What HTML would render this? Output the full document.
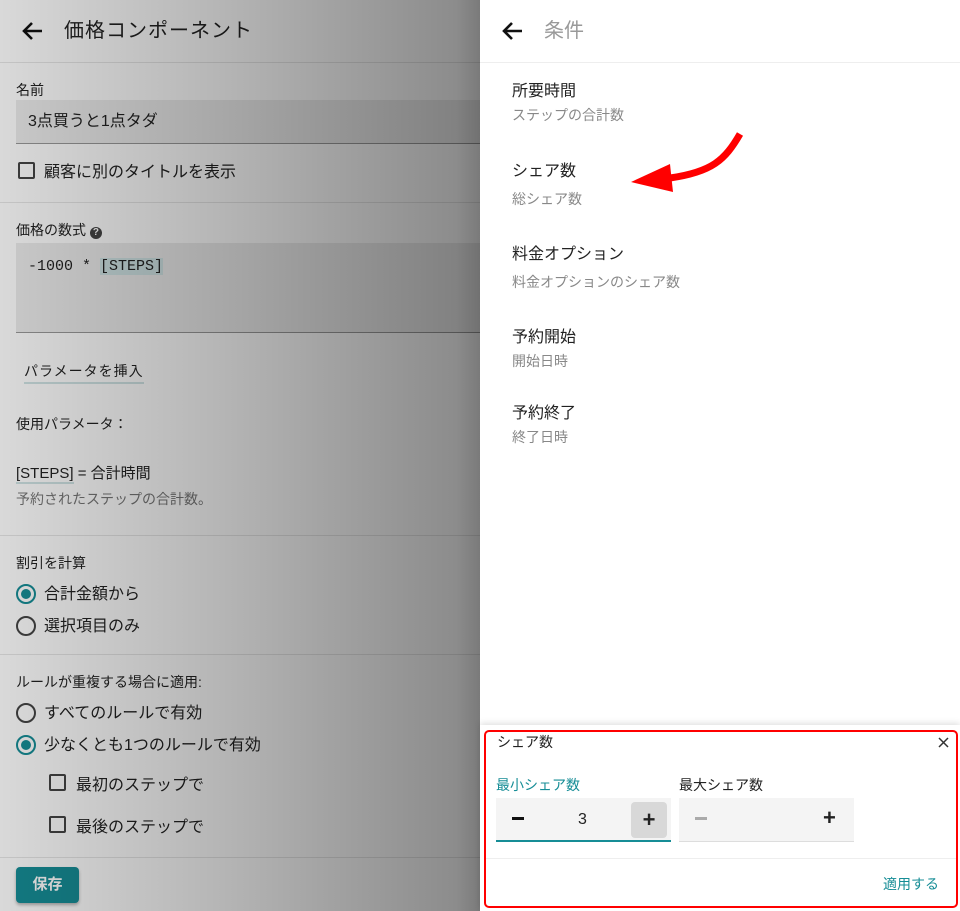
<!DOCTYPE html>
<html><head><meta charset="utf-8"><style>
*{box-sizing:border-box;margin:0;padding:0}
body{width:960px;height:911px;overflow:hidden;background:#fff;font-family:"Liberation Sans","Noto Sans CJK JP",sans-serif;color:#222;position:relative}
.left{position:absolute;left:0;top:0;width:480px;height:911px;background:#fff;overflow:hidden}
.ov{position:absolute;left:0;top:0;width:480px;height:911px;background:linear-gradient(to right,rgba(0,0,0,0.15),rgba(0,0,0,0.30) 50%,rgba(0,0,0,0.45) 95%,rgba(0,0,0,0.52));}
.abs{position:absolute;line-height:1.2}
.hr{position:absolute;left:0;width:480px;height:1px;background:#e6e6e6}
.t14{font-size:14px}
.t16{font-size:16px}
.cb{position:absolute;width:17px;height:17px;border:2px solid #444;border-radius:2px}
.rd{position:absolute;width:20px;height:20px;border:2px solid #444;border-radius:50%}
.rd.on{border-color:#168d96}
.rd.on::after{content:"";position:absolute;left:3px;top:3px;width:10px;height:10px;border-radius:50%;background:#168d96}
.right .item{position:absolute;left:512px;line-height:1.2}
.item .a{font-size:16px;color:#222}
.item .b{font-size:14px;color:#888;margin-top:6px}
.mn{position:absolute;width:12px;height:3px;background:#111}
</style></head><body>
<div class="left">
 <svg class="abs" style="left:20px;top:18px" width="26" height="26" viewBox="0 0 26 26"><path d="M22 13H4M12 5l-8 8 8 8" stroke="#111" stroke-width="2.6" fill="none"/></svg>
 <div class="abs" style="left:64px;top:19px;font-size:20px;letter-spacing:1px">価格コンポーネント</div>
 <div class="hr" style="top:62px"></div>
 <div class="abs t14" style="left:16px;top:82px">名前</div>
 <div class="abs" style="left:16px;top:100px;width:470px;height:44px;background:#ececec;border-bottom:1px solid #999"></div>
 <div class="abs t16" style="left:28px;top:112px">3点買うと1点タダ</div>
 <div class="cb" style="left:18px;top:162px"></div>
 <div class="abs t16" style="left:44px;top:163px">顧客に別のタイトルを表示</div>
 <div class="hr" style="top:202px"></div>
 <div class="abs t14" style="left:16px;top:222px">価格の数式 <span style="display:inline-block;width:12px;height:12px;border-radius:50%;background:#444;color:#fff;font-size:10px;text-align:center;line-height:12px;font-weight:bold">?</span></div>
 <div class="abs" style="left:16px;top:243px;width:470px;height:90px;background:#ececec;border-bottom:1px solid #999"></div>
 <div class="abs" style="left:28px;top:258px;font-family:'Liberation Mono',monospace;font-size:15px">-1000 * <span style="background:#cfe3e4">[STEPS]</span></div>
 <div class="abs t14" style="left:24px;top:363px;letter-spacing:1px;border-bottom:2px solid #cfe3e4;padding-bottom:2px">パラメータを挿入</div>
 <div class="abs t14" style="left:16px;top:416px">使用パラメータ：</div>
 <div class="abs" style="left:16px;top:465px;font-size:15px"><span style="border-bottom:2px solid #cfe3e4">[STEPS]</span> = 合計時間</div>
 <div class="abs t14" style="left:16px;top:491px;color:#777">予約されたステップの合計数。</div>
 <div class="hr" style="top:535px"></div>
 <div class="abs t14" style="left:16px;top:555px">割引を計算</div>
 <div class="rd on" style="left:16px;top:584px"></div>
 <div class="abs t16" style="left:44px;top:585px">合計金額から</div>
 <div class="rd" style="left:16px;top:616px"></div>
 <div class="abs t16" style="left:44px;top:617px">選択項目のみ</div>
 <div class="hr" style="top:654px"></div>
 <div class="abs t14" style="left:16px;top:674px">ルールが重複する場合に適用:</div>
 <div class="rd" style="left:16px;top:703px"></div>
 <div class="abs t16" style="left:44px;top:704px">すべてのルールで有効</div>
 <div class="rd on" style="left:16px;top:735px"></div>
 <div class="abs t16" style="left:44px;top:736px">少なくとも1つのルールで有効</div>
 <div class="cb" style="left:49px;top:774px"></div>
 <div class="abs t16" style="left:76px;top:776px">最初のステップで</div>
 <div class="cb" style="left:49px;top:816px"></div>
 <div class="abs t16" style="left:76px;top:818px">最後のステップで</div>
 <div class="hr" style="top:857px"></div>
 <div class="abs" style="left:16px;top:867px;width:63px;height:36px;background:#168d96;border-radius:4px;color:#fff;font-size:15px;font-weight:bold;text-align:center;line-height:36px;box-shadow:0 2px 3px rgba(0,0,0,.3)">保存</div>
 <div class="ov"></div>
</div>
<div class="right">
 <svg class="abs" style="left:500px;top:18px" width="26" height="26" viewBox="0 0 26 26"><path d="M22 13H4M12 5l-8 8 8 8" stroke="#111" stroke-width="2.6" fill="none"/></svg>
 <div class="abs" style="left:544px;top:19px;font-size:20px;color:#999">条件</div>
 <div class="abs" style="left:480px;top:62px;width:480px;height:1px;background:#eee"></div>
 <div class="item" style="top:82px"><div class="a">所要時間</div><div class="b">ステップの合計数</div></div>
 <div class="item" style="top:162px"><div class="a">シェア数</div><div class="b" style="margin-top:10px">総シェア数</div></div>
 <div class="item" style="top:245px"><div class="a">料金オプション</div><div class="b" style="margin-top:10px">料金オプションのシェア数</div></div>
 <div class="item" style="top:328px"><div class="a">予約開始</div><div class="b">開始日時</div></div>
 <div class="item" style="top:404px"><div class="a">予約終了</div><div class="b">終了日時</div></div>
 <svg class="abs" style="left:620px;top:125px" width="140" height="80" viewBox="620 125 140 80"><path d="M740 134 C725 160 712 172 670 178" stroke="red" stroke-width="7" fill="none"/><path d="M631 182 L670 164 L673 192 Z" fill="red"/></svg>
 <div class="abs" style="left:480px;top:725px;width:480px;height:186px;background:#fff;box-shadow:0 -2px 6px rgba(0,0,0,.12)"></div>
 <div class="abs" style="left:484px;top:730px;width:474px;height:178px;border:2px solid #f00;border-radius:5px"></div>
 <div class="abs t14" style="left:497px;top:734px">シェア数</div>
 <svg class="abs" style="left:938px;top:737px" width="11" height="11" viewBox="0 0 11 11"><path d="M1 1L10 10M10 1L1 10" stroke="#333" stroke-width="1.5"/></svg>
 <div class="abs t14" style="left:496px;top:777px;color:#168d96">最小シェア数</div>
 <div class="abs t14" style="left:679px;top:777px">最大シェア数</div>
 <div class="abs" style="left:496px;top:798px;width:175px;height:44px;background:#f4f4f4;border-bottom:2px solid #168d96"></div>
 <div class="mn" style="left:512px;top:817px"></div>
 <div class="abs" style="left:578px;top:810px;font-size:16px">3</div>
 <div class="abs" style="left:631px;top:802px;width:36px;height:36px;background:#d8d8d8;border-radius:4px;text-align:center;line-height:36px;font-size:22px;font-weight:bold">+</div>
 <div class="abs" style="left:679px;top:798px;width:175px;height:44px;background:#f4f4f4;border-bottom:1px solid #ddd"></div>
 <div class="mn" style="left:695px;top:817px;background:#aaa"></div>
 <div class="abs" style="left:823px;top:805px;font-size:22px;font-weight:bold">+</div>
 <div class="abs" style="left:486px;top:858px;width:470px;height:1px;background:#eee"></div>
 <div class="abs t14" style="left:883px;top:876px;color:#168d96">適用する</div>
</div>
</body></html>
